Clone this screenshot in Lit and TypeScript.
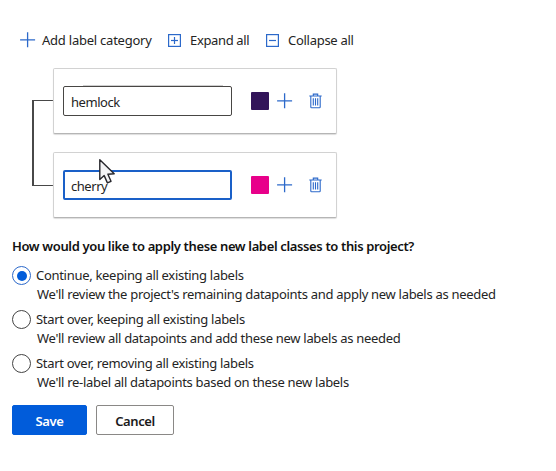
import { LitElement, html, css, svg, nothing } from "lit";
import { customElement, property } from "lit/decorators.js";

const plusIcon = html`<svg width="16" height="16" viewBox="0 0 16 16">
  <path d="M7.6 .3v15M.1 7.8h15" fill="none" stroke="#2c69ca" stroke-width="1.3" />
</svg>`;

const boxIcon = (plus: boolean) => html`<svg width="13" height="13" viewBox="0 0 13 13">
  <rect x=".6" y=".6" width="11.8" height="11.8" fill="none" stroke="#2c69ca" stroke-width="1.2" />
  <path d="M3 6.5h7" stroke="#2c69ca" stroke-width="1.2" />
  ${plus ? svg`<path d="M6.5 3v7" stroke="#2c69ca" stroke-width="1.2" />` : nothing}
</svg>`;

const trashIcon = html`<svg width="13" height="16" viewBox="0 0 13 16">
  <path d="M.3 3h12.4M4.3 2.8V1.1h4.4v1.7M1.8 3v11q0 .8.8.8h7.8q.8 0 .8-.8V3M4.3 5.2v7.2M6.5 5.2v7.2M8.7 5.2v7.2"
    fill="none" stroke="#2c69ca" stroke-width="1.1" />
</svg>`;

@customElement("label-card")
class LabelCard extends LitElement {
  @property() name = "";
  @property() color = "";
  @property({ type: Boolean, reflect: true }) active = false;

  static styles = css`
    :host {
      display: flex;
      align-items: center;
      box-sizing: border-box;
      width: 284px;
      height: 66px;
      padding-left: 9px;
      border: 1px solid #d2d2d2;
      border-bottom-color: #b5b5b5;
      border-radius: 2px;
      background: #fff;
      box-shadow: 0 1px 1px #ddd;
    }
    .field {
      position: relative;
      box-sizing: border-box;
      width: 169px;
      height: 30px;
      padding-left: 7px;
      line-height: 30px;
      letter-spacing: -0.45px;
      border: 1px solid #484644;
      border-radius: 2px;
    }
    :host(:not([active])) .field::before {
      content: "";
      position: absolute;
      left: 19px;
      top: -2px;
      width: 140px;
      height: 1px;
      background: #cfcfcf;
    }
    :host([active]) .field {
      border: 2px solid #1a60c8;
      padding-left: 6px;
      line-height: 28px;
    }
    .swatch {
      width: 18px;
      height: 18px;
      margin: 0 8px 0 19px;
      border-radius: 1px;
    }
    svg { display: block; }
    .trash { margin-left: 16px; }
  `;

  render() {
    return html`<div class="field">${this.name}</div>
      <div class="swatch" style="background:${this.color}"></div>
      ${plusIcon}
      <div class="trash">${trashIcon}</div>`;
  }
}

const choices = [
  ["Continue, keeping all existing labels", "We'll review the project's remaining datapoints and apply new labels as needed"],
  ["Start over, keeping all existing labels", "We'll review all datapoints and add these new labels as needed"],
  ["Start over, removing all existing labels", "We'll re-label all datapoints based on these new labels"],
];

@customElement("app-root")
class AppRoot extends LitElement {
  static styles = css`
    :host {
      display: block;
      position: relative;
      box-sizing: border-box;
      width: 556px;
      height: 471px;
      padding: 30px 0 0 12px;
      background: #fff;
      color: #242424;
      font: 13px/20px "Noto Sans", "Open Sans", sans-serif;
      letter-spacing: -0.3px;
      white-space: nowrap;
      overflow: hidden;
    }
    svg { display: block; }
    .toolbar { display: flex; height: 20px; padding-left: 8px; letter-spacing: -0.23px; }
    .command { display: flex; align-items: center; }
    .add { gap: 6px; width: 148px; }
    .expand { gap: 9px; width: 98px; letter-spacing: -0.35px; }
    .collapse { gap: 9px; letter-spacing: -0.28px; }
    .tree { display: flex; margin: 18px 0 0 20px; }
    .branch {
      box-sizing: border-box;
      width: 21px;
      height: 86px;
      margin-top: 32px;
      border: solid #484848;
      border-width: 1px 0 1px 2px;
    }
    .cards { display: flex; flex-direction: column; gap: 18px; }
    .question { margin: 18px 0 10px; font-weight: 600; color: #111; letter-spacing: -0.36px; }
    .choice { display: flex; gap: 5px; height: 43.8px; }
    .radio {
      box-sizing: border-box;
      display: grid;
      place-items: center;
      width: 19px;
      height: 19px;
      border: 1px solid #444;
      border-radius: 50%;
    }
    .radio.on { border-color: #2c69ca; }
    .dot { width: 10px; height: 10px; border-radius: 50%; background: #015cda; }
    .title { line-height: 19px; }
    .detail { line-height: 19px; padding-left: 1px; }
    .buttons { display: flex; gap: 9px; margin-top: 7.6px; }
    .button {
      box-sizing: border-box;
      height: 30px;
      border: 1px solid #8a8886;
      border-radius: 2px;
      text-align: center;
      line-height: 30px;
      font-weight: 600;
      letter-spacing: -0.4px;
      color: #1b1b1b;
      width: 78px;
    }
    .primary { width: 75px; background: #015cda; border-color: #015cda; color: #fff; }
    .cursor { position: absolute; left: 98px; top: 158px; }
  `;

  render() {
    return html`
      <div class="toolbar">
        <div class="command add">${plusIcon}<span>Add label category</span></div>
        <div class="command expand">${boxIcon(true)}<span>Expand all</span></div>
        <div class="command collapse">${boxIcon(false)}<span>Collapse all</span></div>
      </div>
      <div class="tree">
        <div class="branch"></div>
        <div class="cards">
          <label-card name="hemlock" color="#32145a"></label-card>
          <label-card name="cherry" color="#e8008a" active></label-card>
        </div>
      </div>
      <div class="question"><span>How would you like to apply these new label classes to this project?</span></div>
      ${choices.map(([title, detail], i) => html`<div class="choice">
        <div class="radio ${i === 0 ? "on" : ""}">${i === 0 ? html`<div class="dot"></div>` : nothing}</div>
        <div>
          <div class="title">${title}</div>
          <div class="detail">${detail}</div>
        </div>
      </div>`)}
      <div class="buttons">
        <div class="button primary">Save</div>
        <div class="button">Cancel</div>
      </div>
      <svg class="cursor" width="20" height="28" viewBox="0 0 20 28">
        <path d="M1.8 1.8V21.6L6.2 17.6L9.4 24.9L13 23.3L9.9 16.2L16.2 15.7Z" fill="#f4f4f6" stroke="#26262c" stroke-width="1.4" stroke-linejoin="round" />
      </svg>`;
  }
}
